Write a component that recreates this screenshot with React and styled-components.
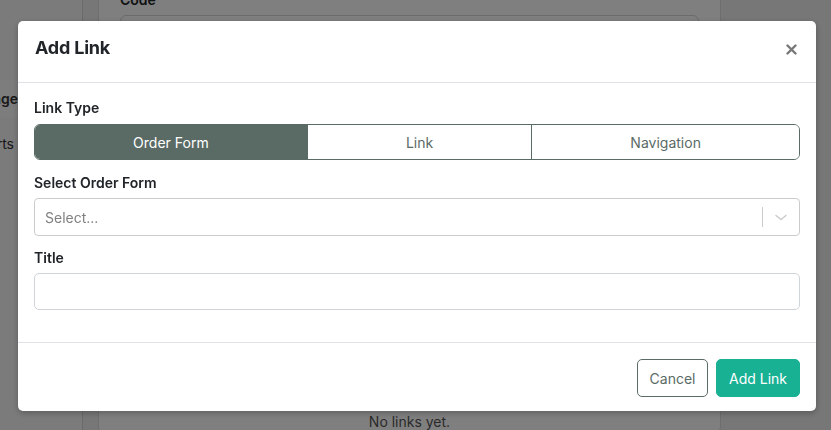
import React from 'react';
import styled, { createGlobalStyle } from 'styled-components';

const GlobalStyle = createGlobalStyle`
  html, body {
    margin: 0;
    padding: 0;
    height: 100%;
    overflow: hidden;
    font-family: Inter, "Noto Sans", "Liberation Sans", sans-serif;
    color: #212529;
  }
  #root {
    height: 100%;
  }
  * {
    box-sizing: border-box;
  }
`;

const Page = styled.div`
  display: flex;
  height: 430px;
  background-color: #eeeeee;
  overflow: hidden;
`;

const Sidebar = styled.nav`
  width: 83px;
  flex-shrink: 0;
  background-color: #f6f6f6;
  border-right: 1px solid #d4d4d4;
  padding-top: 80px;
  display: flex;
  flex-direction: column;
  overflow: hidden;
`;

const SideItem = styled.div`
  display: flex;
  justify-content: flex-end;
  align-items: center;
  height: ${props => props.active ? '37px' : '52px'};
  padding-right: ${props => props.active ? '64px' : '68px'};
  white-space: nowrap;
  font-size: 14px;
  font-weight: ${props => props.active ? 600 : 400};
  background-color: ${props => props.active ? '#fafafa' : 'transparent'};
  color: #333;
`;

const Main = styled.main`
  flex: 1;
  padding: 0 110px 0 15px;
`;

const Card = styled.section`
  width: 623px;
  margin-top: -12px;
  background-color: #fff;
  border: 1px solid #dcdcdc;
  border-radius: 6px;
  padding: 0 21px;
`;

const CardLabel = styled.div`
  font-size: 14px;
  font-weight: 600;
  line-height: 21px;
  margin-bottom: 5px;
`;

const CardInput = styled.div`
  height: 38px;
  border: 1px solid #d6d6d6;
  border-radius: 6px;
`;

const EmptyText = styled.p`
  margin: 358px 0 0;
  text-align: center;
  font-size: 14px;
  line-height: 21px;
  color: #555;
`;

const Overlay = styled.div`
  position: fixed;
  inset: 0;
  background-color: rgba(0, 0, 0, 0.5);
  padding: 21px 15px 0 18px;
`;

const Modal = styled.div`
  width: 798px;
  background-color: #fff;
  border-radius: 5px;
  box-shadow: 0 2px 6px rgba(0, 0, 0, 0.25);
  display: flex;
  flex-direction: column;
`;

const Header = styled.header`
  display: flex;
  align-items: center;
  justify-content: space-between;
  height: 62px;
  padding: 0 17px 8px 17px;
  border-bottom: 1px solid #dee2e6;
`;

const Title = styled.h2`
  margin: 0;
  font-size: 18px;
  font-weight: 700;
  letter-spacing: -0.2px;
  color: #212529;
`;

const CloseButton = styled.button`
  border: none;
  background: none;
  padding: 0;
  width: 16px;
  height: 16px;
  display: flex;
  align-items: center;
  justify-content: center;
  margin-top: 4px;
  color: #777;
  cursor: pointer;
`;

const Body = styled.div`
  display: flex;
  flex-direction: column;
  padding: 14px 16px 32px;
  border-bottom: 1px solid #dee2e6;
`;

const Label = styled.label`
  display: block;
  font-size: 14px;
  font-weight: 600;
  line-height: 21px;
  margin: ${props => props.top ?? 12}px 0 ${props => props.gap ?? 6}px;
  color: #212529;
`;

const Segments = styled.div`
  display: flex;
  height: 36px;
  border: 1px solid #5a6b66;
  border-radius: 6px;
  overflow: hidden;
`;

const Segment = styled.button`
  flex: 1 1 auto;
  border: none;
  border-left: ${props => props.first ? 'none' : '1px solid #5a6b66'};
  background-color: ${props => props.active ? '#5a6b66' : '#fff'};
  color: ${props => props.active ? '#fff' : '#5a6b66'};
  font-family: inherit;
  font-size: 14px;
  padding: 0;
  cursor: pointer;
`;

const SelectBox = styled.div`
  display: flex;
  align-items: center;
  height: 38px;
  border: 1px solid #cccccc;
  border-radius: 4px;
  background-color: #fff;
`;

const Placeholder = styled.span`
  flex: 1;
  padding-left: 10px;
  font-size: 14px;
  color: #808080;
`;

const Separator = styled.span`
  width: 1px;
  align-self: stretch;
  margin: 8px 0;
  background-color: #cccccc;
`;

const Indicator = styled.span`
  width: 36px;
  display: flex;
  justify-content: center;
  align-items: center;
  color: #cccccc;
`;

const TextInput = styled.input`
  height: 37px;
  width: 100%;
  border: 1px solid #ced4da;
  border-radius: 5px;
  font-family: inherit;
  font-size: 14px;
  padding: 0 12px;
  outline: none;
`;

const Footer = styled.footer`
  display: flex;
  justify-content: flex-end;
  gap: 8px;
  padding: 16px 16px 14px;
`;

const Button = styled.button`
  height: 38px;
  padding: 0 ${props => props.primary ? '12px' : '11.5px'};
  border-radius: 5px;
  border: 1px solid ${props => props.primary ? '#18b194' : '#5a6b66'};
  background-color: ${props => props.primary ? '#18b194' : '#fff'};
  color: ${props => props.primary ? '#fff' : '#5a6b66'};
  font-family: inherit;
  font-size: 14px;
  cursor: pointer;
`;

const CloseIcon = () => (
  <svg width="11" height="11" viewBox="0 0 11 11">
    <path d="M1.5 1.5 L9.5 9.5 M9.5 1.5 L1.5 9.5" stroke="currentColor" strokeWidth="2.4" strokeLinecap="round" />
  </svg>
);

const ChevronIcon = () => (
  <svg width="14" height="9" viewBox="0 0 14 9">
    <path d="M2 2.5 L7 6.5 L12 2.5" stroke="currentColor" strokeWidth="1.6" fill="none" strokeLinecap="round" strokeLinejoin="round" />
  </svg>
);

const types = ['Order Form', 'Link', 'Navigation'];

const App = () => (
  <>
    <GlobalStyle />
    <Page>
      <Sidebar>
        <SideItem active>Homepage</SideItem>
        <SideItem>Reports</SideItem>
      </Sidebar>
      <Main>
        <Card>
          <CardLabel>Code</CardLabel>
          <CardInput />
          <EmptyText>No links yet.</EmptyText>
        </Card>
      </Main>
    </Page>
    <Overlay>
      <Modal>
        <Header>
          <Title>Add Link</Title>
          <CloseButton aria-label="Close"><CloseIcon /></CloseButton>
        </Header>
        <Body>
          <Label top={0}>Link Type</Label>
          <Segments>
            {types.map((t, i) => (
              <Segment key={t} first={i === 0} active={i === 0}>{t}</Segment>
            ))}
          </Segments>
          <Label gap={5}>Select Order Form</Label>
          <SelectBox>
            <Placeholder>Select...</Placeholder>
            <Separator />
            <Indicator><ChevronIcon /></Indicator>
          </SelectBox>
          <Label top={11} gap={5}>Title</Label>
          <TextInput type="text" />
        </Body>
        <Footer>
          <Button>Cancel</Button>
          <Button primary>Add Link</Button>
        </Footer>
      </Modal>
    </Overlay>
  </>
);

export default App;
